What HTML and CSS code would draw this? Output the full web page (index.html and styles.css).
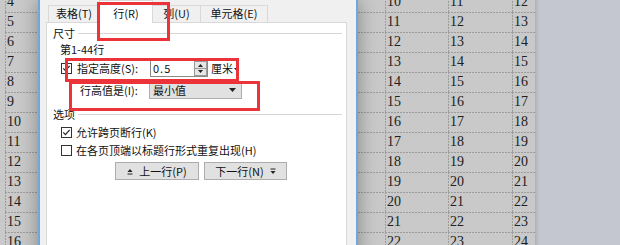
FILE: index.html
```html
<!DOCTYPE html>
<html lang="zh-CN">
<head>
    <meta charset="UTF-8">
    <title>表格属性</title>
    <link rel="stylesheet" href="styles.css">
</head>
<body>
    <div class="sheet" id="sheet"></div>

    <div class="dialog">
        <div class="tabs">
            <div class="tab tab-table">表格(T)</div>
            <div class="tab tab-row active">行(R)</div>
            <div class="tab tab-col">列(U)</div>
            <div class="tab tab-cell">单元格(E)</div>
        </div>
        <div class="panel">
            <div class="group">尺寸</div>
            <div class="line rows-label">第1-44行</div>

            <div class="line field">
                <svg class="box" width="11" height="11" viewBox="0 0 11 11">
                    <rect x="0.5" y="0.5" width="10" height="10" fill="#fff" stroke="#333"/>
                    <path d="M2.3 5.4 L4.4 7.6 L8.7 2.8" fill="none" stroke="#222" stroke-width="1.2"/>
                </svg>
                <span class="field-label">指定高度(S):</span>
                <div class="spin">
                    <span class="spin-value">0.5</span>
                    <svg class="spin-arrows" width="13" height="15" viewBox="0 0 13 15">
                        <rect x="0.5" y="0.5" width="12" height="14" fill="#e6e6e6" stroke="#9a9a9a"/>
                        <line x1="1" y1="7.5" x2="12" y2="7.5" stroke="#9a9a9a"/>
                        <path d="M4 6 L6.5 3 L9 6 Z" fill="#222"/>
                        <path d="M4 9 L6.5 12 L9 9 Z" fill="#222"/>
                    </svg>
                </div>
                <span class="unit">厘米</span>
                <svg class="unit-arrow" width="5" height="3" viewBox="0 0 5 3">
                    <path d="M0 0 L5 0 L2.5 3 Z" fill="#222"/>
                </svg>
            </div>

            <div class="line field rule">
                <span class="rule-label">行高值是(I):</span>
                <div class="combo">
                    <span>最小值</span>
                    <svg width="7" height="4" viewBox="0 0 7 4">
                        <path d="M0 0 L7 0 L3.5 4 Z" fill="#222"/>
                    </svg>
                </div>
            </div>

            <div class="group options">选项</div>

            <div class="line check">
                <svg class="box" width="11" height="11" viewBox="0 0 11 11">
                    <rect x="0.5" y="0.5" width="10" height="10" fill="#fff" stroke="#333"/>
                    <path d="M2.3 5.4 L4.4 7.6 L8.7 2.8" fill="none" stroke="#222" stroke-width="1.2"/>
                </svg>
                <span>允许跨页断行(K)</span>
            </div>
            <div class="line check">
                <svg class="box" width="11" height="11" viewBox="0 0 11 11">
                    <rect x="0.5" y="0.5" width="10" height="10" fill="#fff" stroke="#333"/>
                </svg>
                <span>在各页顶端以标题行形式重复出现(H)</span>
            </div>

            <div class="buttons">
                <div class="btn btn-prev">
                    <svg width="6" height="7" viewBox="0 0 6 7">
                        <path d="M0.5 4 L3 1 L5.5 4 Z" fill="#222"/>
                        <line x1="0.5" y1="6" x2="5.5" y2="6" stroke="#222"/>
                    </svg>
                    <span>上一行(P)</span>
                </div>
                <div class="btn btn-next">
                    <span>下一行(N)</span>
                    <svg width="6" height="7" viewBox="0 0 6 7">
                        <line x1="0.5" y1="1" x2="5.5" y2="1" stroke="#222"/>
                        <path d="M0.5 3 L3 6 L5.5 3 Z" fill="#222"/>
                    </svg>
                </div>
            </div>
        </div>
    </div>

    <div class="mark mark-tab"></div>
    <div class="mark mark-height"></div>
    <div class="mark mark-rule"></div>

    <script>
        // table behind the dialog: each cell shows row + column offset
        const sheet = document.getElementById('sheet');
        for (let r = 0; r < 13; r++) {
            for (let c = 0; c < 9; c++) {
                const cell = document.createElement('div');
                cell.className = 'cell';
                cell.textContent = 4 + r + c;
                sheet.appendChild(cell);
            }
        }
    </script>
</body>
</html>
```

FILE: styles.css
```css
body {
    margin: 0;
    width: 620px;
    height: 245px;
    overflow: hidden;
    position: relative;
    background-color: #c4c7cf;
    font-family: "Noto Sans CJK SC", sans-serif;
}

/* document table in the background */
.sheet {
    width: 530px;
    margin-top: -8px;
    padding-left: 5px;
    background-color: #c9c9c9;
    display: grid;
    grid-template-columns: repeat(6, 63.33px) 63px 64px 23px;
    box-shadow: 2px 0 3px rgba(0, 0, 0, 0.12);
    font-family: "Liberation Serif", serif;
    font-size: 14px;
    color: #202020;
}

.sheet .cell {
    height: 20px;
    line-height: 20px;
    padding-left: 2px;
    box-sizing: border-box;
    overflow: hidden;
    white-space: nowrap;
    background-image:
        repeating-linear-gradient(90deg, #9c9c9c 0 2px, transparent 2px 3px),
        repeating-linear-gradient(180deg, #9c9c9c 0 2px, transparent 2px 3px);
    background-size: 100% 1px, 1px 100%;
    background-position: top left, top left;
    background-repeat: no-repeat;
}

/* dialog */
.dialog {
    position: absolute;
    left: 38px;
    top: 0;
    width: 320px;
    height: 262px;
    box-sizing: border-box;
    border-left: 2px solid #6fa6dc;
    border-right: 2px solid #6fa6dc;
    padding: 0 9px 0 6px;
    background-color: #f0f0f0;
    box-shadow: 0 0 18px rgba(0, 0, 0, 0.35);
    display: flex;
    flex-direction: column;
    font-size: 11px;
    color: #111;
}

.tabs {
    display: flex;
    align-items: flex-end;
    height: 22px;
    padding-left: 2px;
}

.tab {
    height: 17px;
    box-sizing: border-box;
    border: 1px solid #d9d9d9;
    border-bottom: none;
    background-color: #f0f0f0;
    text-align: center;
    line-height: 14px;
    margin-left: -1px;
}

.tab-table {
    width: 52px;
    margin-left: 0;
}

.tab-row {
    width: 54px;
}

.tab-col {
    width: 49px;
}

.tab-cell {
    width: 68px;
}

.tab.active {
    height: 23px;
    padding-top: 5px;
    margin-bottom: -1px;
    background-color: #fff;
    position: relative;
    z-index: 1;
}

.panel {
    flex: 1;
    background-color: #fff;
    border: 1px solid #d9d9d9;
    padding: 2px 4px 0 6px;
}

.group {
    display: flex;
    align-items: center;
    height: 16px;
    line-height: 16px;
}

.group::after {
    content: "";
    flex: 1;
    height: 1px;
    margin-left: 3px;
    background-color: #d5d5d5;
}

.group.options {
    margin-top: 7px;
}

.line {
    display: flex;
    align-items: center;
    height: 16px;
    line-height: 16px;
}

.rows-label {
    padding-left: 7px;
}

.field {
    height: 18px;
    margin-top: 2px;
}

.box {
    flex-shrink: 0;
    margin-left: 8px;
}

.field-label {
    width: 73px;
    margin-left: 5px;
}

.spin {
    display: flex;
    align-items: center;
    width: 58px;
    height: 17px;
    box-sizing: border-box;
    border: 1px solid #8a8a8a;
    background-color: #fff;
}

.spin-value {
    flex: 1;
    padding-left: 2px;
    letter-spacing: 1px;
}

.unit {
    margin-left: 3px;
}

.unit-arrow {
    margin-left: 1px;
    margin-top: 2px;
}

.field.rule {
    margin-top: 4px;
}

.rule-label {
    width: 69px;
    margin-left: 27px;
}

.combo {
    display: flex;
    align-items: center;
    justify-content: space-between;
    width: 93px;
    height: 18px;
    box-sizing: border-box;
    border: 1px solid #adadad;
    background-color: #e1e1e1;
    padding: 0 5px 0 3px;
}

.check {
    margin-top: 2px;
}

.check span {
    margin-left: 4px;
}

.buttons {
    display: flex;
    gap: 5px;
    margin-top: 4px;
    padding-left: 62px;
}

.btn {
    display: flex;
    align-items: center;
    justify-content: center;
    gap: 6px;
    height: 18px;
    box-sizing: border-box;
    border: 1px solid #adadad;
    background-color: #e1e1e1;
}

.btn-prev {
    width: 84px;
}

.btn-next {
    width: 83px;
}

/* red annotation frames */
.mark {
    position: absolute;
    box-sizing: border-box;
    border: 3px solid #ec3339;
    z-index: 2;
}

.mark-tab {
    left: 97px;
    top: 2px;
    width: 73px;
    height: 39px;
}

.mark-height {
    left: 65px;
    top: 58px;
    width: 174px;
    height: 24px;
}

.mark-rule {
    left: 69px;
    top: 81px;
    width: 191px;
    height: 30px;
}
```
